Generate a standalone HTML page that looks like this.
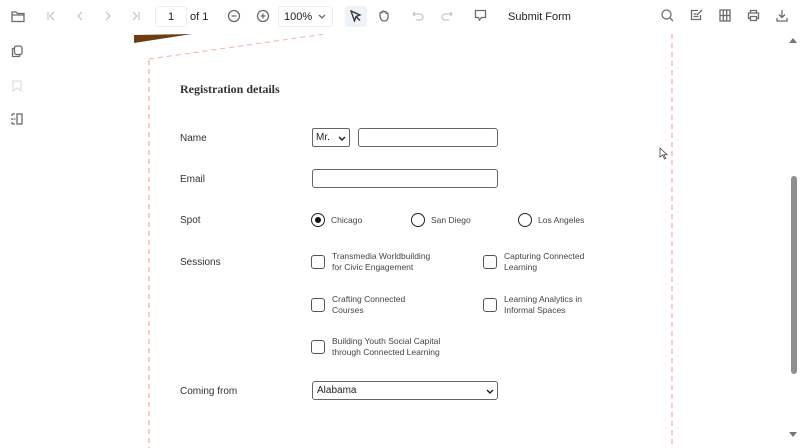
<!DOCTYPE html>
<html><head><meta charset="utf-8"><style>
*{margin:0;padding:0;box-sizing:border-box}
body{width:800px;height:448px;overflow:hidden;background:#fff;font-family:"Liberation Sans",sans-serif;position:relative;color:#222}
.a{position:absolute}
.ic{position:absolute;stroke:#6b6b6b;fill:none;stroke-width:1.3}
.lbl{position:absolute;font-size:10px;color:#333}
.inp{position:absolute;border:1px solid #666;border-radius:3px;background:#fff}
.cb{position:absolute;width:14px;height:14px;border:1.3px solid #555;border-radius:3px}
.ct{position:absolute;font-size:8.5px;line-height:11px;color:#444}
.rd{position:absolute;width:14px;height:14px;border:1.3px solid #222;border-radius:50%}
.rt{position:absolute;font-size:8.5px;color:#444}
</style></head><body>
<!-- toolbar -->
<svg class="ic" style="left:11px;top:10px" width="14" height="13" viewBox="0 0 14 13"><path d="M1 2h4l1.5 1.5H13v8H1z M1 5h12"/></svg>
<svg class="ic" style="left:45px;top:10px;stroke:#c8c8c8" width="12" height="12" viewBox="0 0 12 12"><path d="M3 2v8M9 2L5 6l4 4"/></svg>
<svg class="ic" style="left:74px;top:10px;stroke:#c8c8c8" width="12" height="12" viewBox="0 0 12 12"><path d="M8 2L4 6l4 4"/></svg>
<svg class="ic" style="left:102px;top:10px;stroke:#c8c8c8" width="12" height="12" viewBox="0 0 12 12"><path d="M4 2l4 4-4 4"/></svg>
<svg class="ic" style="left:130px;top:10px;stroke:#c8c8c8" width="12" height="12" viewBox="0 0 12 12"><path d="M9 2v8M3 2l4 4-4 4"/></svg>
<div class="a" style="left:155px;top:6px;width:32px;height:21px;border:1px solid #eee;border-radius:3px;font-size:11px;text-align:center;line-height:20px">1</div>
<div class="a" style="left:190px;top:11px;font-size:11px">of 1</div>
<svg class="ic" style="left:227px;top:9px" width="14" height="14" viewBox="0 0 14 14"><circle cx="7" cy="7" r="5.5"/><path d="M4.5 7h5"/></svg>
<svg class="ic" style="left:256px;top:9px" width="14" height="14" viewBox="0 0 14 14"><circle cx="7" cy="7" r="5.5"/><path d="M4.5 7h5M7 4.5v5"/></svg>
<div class="a" style="left:278px;top:6px;width:55px;height:21px;border:1px solid #eee;border-radius:3px;font-size:11px;line-height:20px;padding-left:5px">100%</div>
<svg class="ic" style="left:318px;top:14px" width="8" height="6" viewBox="0 0 8 6"><path d="M1 1l3 3 3-3"/></svg>
<div class="a" style="left:345px;top:6px;width:22px;height:21px;background:#eef3f8;border-radius:3px"></div>
<svg class="ic" style="left:350px;top:10px;stroke:#333" width="12" height="12" viewBox="0 0 12 12"><path d="M1 1l9 4-4 1.5L4.5 11z M6 6.5l4 4"/></svg>
<svg class="ic" style="left:378px;top:9px" width="12" height="13" viewBox="0 0 12 13"><path d="M2 7V4.5a1 1 0 012 0V3a1 1 0 012 0v.5a1 1 0 012 0V5a1 1 0 012 0v3.5c0 2-1.5 3.5-3.5 3.5H6C4 12 2.5 10 2 7z"/></svg>
<svg class="ic" style="left:412px;top:11px;stroke:#c8c8c8" width="12" height="10" viewBox="0 0 12 10"><path d="M3 1L1 3l2 2M1 3h7a3 3 0 010 6H4"/></svg>
<svg class="ic" style="left:441px;top:11px;stroke:#c8c8c8" width="12" height="10" viewBox="0 0 12 10"><path d="M9 1l2 2-2 2M11 3H4a3 3 0 000 6h4"/></svg>
<svg class="ic" style="left:474px;top:9px" width="13" height="13" viewBox="0 0 13 13"><path d="M1.5 1.5h10v7h-4l-2 2.5-1-2.5h-3z"/></svg>
<div class="a" style="left:508px;top:11px;font-size:11px;color:#222">Submit Form</div>
<svg class="ic" style="left:661px;top:9px" width="13" height="13" viewBox="0 0 13 13"><circle cx="5.5" cy="5.5" r="4.5"/><path d="M9 9l3 3"/></svg>
<svg class="ic" style="left:690px;top:9px" width="13" height="12" viewBox="0 0 13 12"><path d="M8 1.5H1.5v9h9V6 M3.5 5h3M3.5 7.5h5M7 6l5-5"/></svg>
<svg class="ic" style="left:719px;top:9px" width="12" height="13" viewBox="0 0 12 13"><rect x="1" y="1" width="10" height="11"/><path d="M4.3 1v11M7.7 1v11M1 6.5h10"/></svg>
<svg class="ic" style="left:747px;top:9px" width="13" height="13" viewBox="0 0 13 13"><path d="M3.5 4V1.5h6V4 M3 9.5H1.5V4h10v5.5H10 M3.5 7.5h6v4h-6z"/></svg>
<svg class="ic" style="left:776px;top:9px" width="12" height="13" viewBox="0 0 12 13"><path d="M6 1v7M3 5.5l3 3 3-3M1 9v3h10V9"/></svg>
<!-- sidebar -->
<svg class="ic" style="left:11px;top:45px" width="12" height="13" viewBox="0 0 12 13"><rect x="3.5" y="1" width="7.5" height="8.5" rx="2"/><path d="M3 3.5H1.5v8h7V10"/></svg>
<svg class="ic" style="left:12px;top:80px;stroke:#d8e0e8" width="10" height="12" viewBox="0 0 10 12"><path d="M1 1h8v10L5 8l-4 3z"/></svg>
<svg class="ic" style="left:11px;top:113px" width="12" height="12" viewBox="0 0 12 12"><rect x="6" y="1" width="5" height="10"/><path d="M1 1h3M1 11h3M1 1v2M1 5v2M1 9v2M2.5 6h2"/></svg>
<!-- page -->
<svg class="a" style="left:130px;top:32px" width="560" height="416">
<polygon points="4,3 62,2 4,11" fill="#6b3f12"/>
<line x1="19" y1="27" x2="195" y2="2" stroke="#f7b0a0" stroke-width="1" stroke-dasharray="5,4"/>
<line x1="19" y1="28" x2="19" y2="416" stroke="#f7b0a0" stroke-width="1.3" stroke-dasharray="5,4"/>
<line x1="542" y1="2" x2="542" y2="416" stroke="#f7b0a0" stroke-width="1.3" stroke-dasharray="5,4"/>
</svg>
<div class="a" style="left:180px;top:82px;font-family:'Liberation Serif',serif;font-weight:bold;font-size:12px;color:#333">Registration details</div>
<div class="lbl" style="left:180px;top:133px">Name</div>
<div class="lbl" style="left:180px;top:174px">Email</div>
<div class="lbl" style="left:180px;top:215px">Spot</div>
<div class="lbl" style="left:180px;top:257px">Sessions</div>
<div class="lbl" style="left:180px;top:386px">Coming from</div>
<div class="inp" style="left:312px;top:128px;width:38px;height:19px;font-size:10px;line-height:18px;padding-left:3px;border-radius:2px">Mr.</div>
<svg class="ic" style="left:338px;top:136px;stroke:#222;stroke-width:1.5" width="8" height="6" viewBox="0 0 8 6"><path d="M1 1l3 3 3-3"/></svg>
<div class="inp" style="left:358px;top:128px;width:140px;height:19px"></div>
<div class="inp" style="left:312px;top:169px;width:186px;height:19px"></div>
<div class="rd" style="left:311px;top:213px"><div class="a" style="left:3px;top:3px;width:6px;height:6px;border-radius:50%;background:#111"></div></div>
<div class="rt" style="left:331px;top:215px">Chicago</div>
<div class="rd" style="left:411px;top:213px"></div>
<div class="rt" style="left:431px;top:215px">San Diego</div>
<div class="rd" style="left:518px;top:213px"></div>
<div class="rt" style="left:538px;top:215px">Los Angeles</div>
<div class="cb" style="left:311px;top:255px"></div>
<div class="ct" style="left:332px;top:251px">Transmedia Worldbuilding<br>for Civic Engagement</div>
<div class="cb" style="left:483px;top:255px"></div>
<div class="ct" style="left:504px;top:251px">Capturing Connected<br>Learning</div>
<div class="cb" style="left:311px;top:298px"></div>
<div class="ct" style="left:332px;top:294px">Crafting Connected<br>Courses</div>
<div class="cb" style="left:483px;top:298px"></div>
<div class="ct" style="left:504px;top:294px">Learning Analytics in<br>Informal Spaces</div>
<div class="cb" style="left:311px;top:340px"></div>
<div class="ct" style="left:332px;top:336px">Building Youth Social Capital<br>through Connected Learning</div>
<div class="inp" style="left:312px;top:381px;width:186px;height:19px;font-size:10px;line-height:18px;padding-left:4px">Alabama</div>
<svg class="ic" style="left:486px;top:389px;stroke:#222;stroke-width:1.5" width="8" height="6" viewBox="0 0 8 6"><path d="M1 1l3 3 3-3"/></svg>
<!-- cursor -->
<svg class="a" style="left:659px;top:147px" width="9" height="13" viewBox="0 0 9 13"><path d="M1 1v9l2.5-2 2 4 1.3-.6-2-3.8H8z" fill="#fff" stroke="#444" stroke-width="0.8"/></svg>
<!-- scrollbar -->
<div class="a" style="left:791px;top:176px;width:6px;height:198px;background:#8f8f8f;border-radius:3px"></div>
<svg class="a" style="left:789px;top:38px" width="9" height="6"><path d="M0 5h8L4 0z" fill="#777"/></svg>
<svg class="a" style="left:789px;top:432px" width="9" height="6"><path d="M0 0h8L4 5z" fill="#777"/></svg>
</body></html>
